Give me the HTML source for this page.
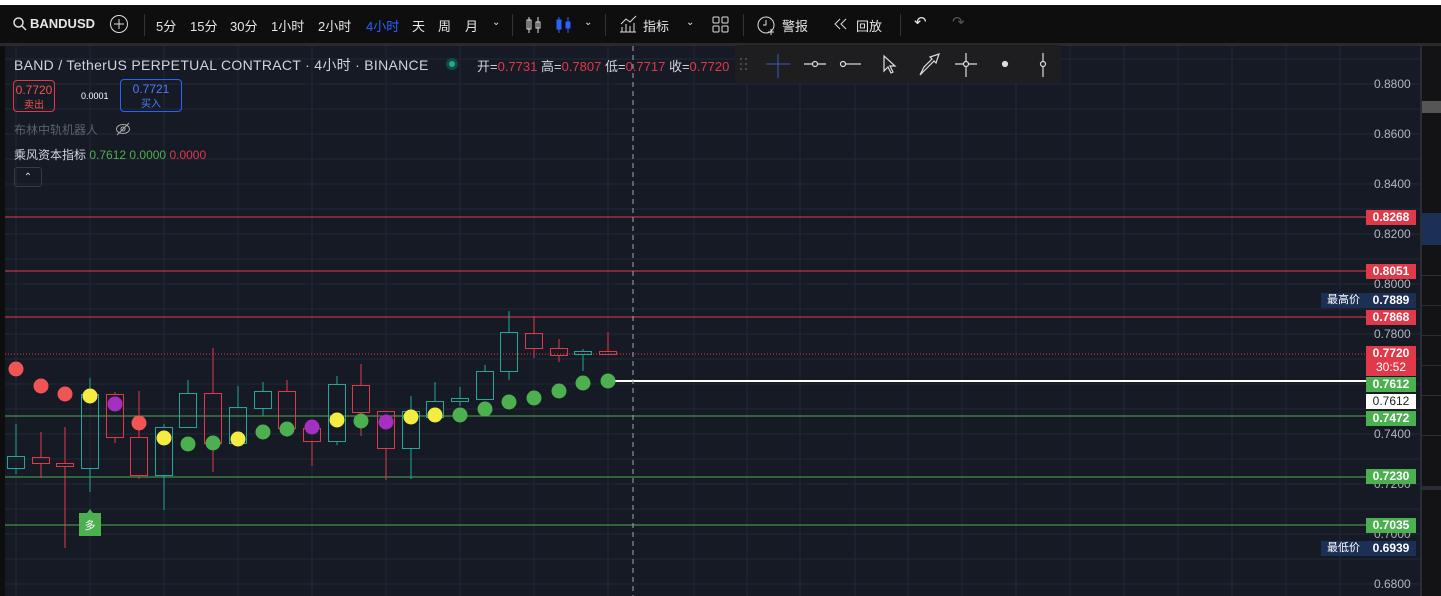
<!DOCTYPE html>
<html><head><meta charset="utf-8"><style>
*{margin:0;padding:0;box-sizing:border-box}
body{width:1441px;height:596px;overflow:hidden;background:#161a25;font-family:"Liberation Sans","Noto Sans CJK SC",sans-serif;position:relative}
.top{position:absolute;left:0;top:0;width:1441px;height:5px;background:#fff}
.tb{position:absolute;left:0;top:5px;width:1441px;height:38px;background:#0e0e0f;color:#e6e6e6;font-size:13px}
.tb span{position:absolute;top:11px;white-space:nowrap}
.sep{position:absolute;top:9px;width:1px;height:22px;background:#333}
.bar{position:absolute;left:0;top:43px;width:1441px;height:3px;background:#2a2a2c}
.rp{position:absolute;left:1420px;top:46px;width:21px;height:550px;background:#131315;border-left:2px solid #2a2d35}
.lb{position:absolute;left:0;top:46px;width:5px;height:550px;background:#0e0e0f}
.t{position:absolute;white-space:nowrap}
.tag{position:absolute;left:1366px;width:50px;height:15px;font-size:12px;font-weight:bold;color:#fff;text-align:center;line-height:15px}
</style></head><body>
<div class="top"></div>
<div class="tb">
<svg style="position:absolute;left:13px;top:12px" width="14" height="14"><circle cx="5.5" cy="5.5" r="4.5" fill="none" stroke="#ddd" stroke-width="1.5"/><line x1="9" y1="9" x2="13" y2="13" stroke="#ddd" stroke-width="1.5"/></svg>
<span style="left:30px;font-weight:bold">BANDUSD</span>
<svg style="position:absolute;left:109px;top:9px" width="20" height="20"><circle cx="10" cy="10" r="8.5" fill="none" stroke="#ddd"/><path d="M10 5v10M5 10h10" stroke="#ddd"/></svg>
<div class="sep" style="left:144px"></div>
<span style="left:156px">5分</span><span style="left:190px">15分</span><span style="left:230px">30分</span><span style="left:271px">1小时</span><span style="left:318px">2小时</span><span style="left:366px;color:#2962ff">4小时</span><span style="left:412px">天</span><span style="left:438px">周</span><span style="left:465px">月</span>
<span style="left:492px;font-size:10px;top:12px">⌄</span>
<div class="sep" style="left:512px"></div>
<svg style="position:absolute;left:524px;top:10px" width="20" height="20"><path d="M5 2v16M3 5h4v9H3zM14 2v16M12 7h4v6h-4z" fill="none" stroke="#ddd"/></svg>
<svg style="position:absolute;left:554px;top:10px" width="20" height="20"><path d="M5 2v16M3 5h4v9H3zM14 2v16M12 7h4v6h-4z" fill="#2962ff" stroke="#2962ff"/></svg>
<span style="left:584px;font-size:10px;top:12px">⌄</span>
<div class="sep" style="left:605px"></div>
<svg style="position:absolute;left:618px;top:9px" width="20" height="20"><path d="M2 18h16M4 18v-5M8 18v-8M12 18v-6M16 18v-9M3 10l5-5 4 3 6-6" fill="none" stroke="#ddd"/></svg>
<span style="left:643px">指标</span>
<span style="left:686px;font-size:10px;top:12px">⌄</span>
<svg style="position:absolute;left:712px;top:11px" width="17" height="17"><rect x="1" y="1" width="6" height="6" rx="1" fill="none" stroke="#ddd"/><rect x="10" y="1" width="6" height="6" rx="1" fill="none" stroke="#ddd"/><rect x="1" y="10" width="6" height="6" rx="1" fill="none" stroke="#ddd"/><rect x="10" y="10" width="6" height="6" rx="1" fill="none" stroke="#ddd"/></svg>
<div class="sep" style="left:743px"></div>
<svg style="position:absolute;left:756px;top:9px" width="22" height="22"><circle cx="10" cy="11" r="8" fill="none" stroke="#ddd"/><path d="M10 6v5h-3M15 15v6M12 18h6" stroke="#ddd" fill="none"/></svg>
<span style="left:782px">警报</span>
<svg style="position:absolute;left:833px;top:13px" width="16" height="12" fill="none" stroke="#ddd"><path d="M7 1L2 6l5 5M13 1L8 6l5 5"/></svg><span style="left:856px">回放</span>
<div class="sep" style="left:900px"></div>
<span style="left:914px;font-size:15px;top:8px">↶</span><span style="left:952px;font-size:15px;top:8px;color:#555">↷</span>
</div>
<div class="bar"></div>
<div class="lb"></div>
<svg style="position:absolute;left:5px;top:46px" width="1415" height="550">
<g stroke="#232837" stroke-width="1">
<line x1="0" x2="1415" y1="13" y2="13"/><line x1="0" x2="1415" y1="38" y2="38"/><line x1="0" x2="1415" y1="63" y2="63"/><line x1="0" x2="1415" y1="88" y2="88"/><line x1="0" x2="1415" y1="113" y2="113"/><line x1="0" x2="1415" y1="138" y2="138"/><line x1="0" x2="1415" y1="163" y2="163"/><line x1="0" x2="1415" y1="188" y2="188"/><line x1="0" x2="1415" y1="213" y2="213"/><line x1="0" x2="1415" y1="238" y2="238"/><line x1="0" x2="1415" y1="263" y2="263"/><line x1="0" x2="1415" y1="288" y2="288"/><line x1="0" x2="1415" y1="313" y2="313"/><line x1="0" x2="1415" y1="338" y2="338"/><line x1="0" x2="1415" y1="363" y2="363"/><line x1="0" x2="1415" y1="388" y2="388"/><line x1="0" x2="1415" y1="413" y2="413"/><line x1="0" x2="1415" y1="438" y2="438"/><line x1="0" x2="1415" y1="463" y2="463"/><line x1="0" x2="1415" y1="488" y2="488"/><line x1="0" x2="1415" y1="513" y2="513"/><line x1="0" x2="1415" y1="538" y2="538"/>
<line y1="0" y2="550" x1="11" x2="11"/><line y1="0" y2="550" x1="85" x2="85"/><line y1="0" y2="550" x1="159" x2="159"/><line y1="0" y2="550" x1="233" x2="233"/><line y1="0" y2="550" x1="307" x2="307"/><line y1="0" y2="550" x1="381" x2="381"/><line y1="0" y2="550" x1="455" x2="455"/><line y1="0" y2="550" x1="529" x2="529"/><line y1="0" y2="550" x1="603" x2="603"/><line y1="0" y2="550" x1="689" x2="689"/><line y1="0" y2="550" x1="742" x2="742"/><line y1="0" y2="550" x1="795" x2="795"/><line y1="0" y2="550" x1="850" x2="850"/><line y1="0" y2="550" x1="903" x2="903"/><line y1="0" y2="550" x1="957" x2="957"/><line y1="0" y2="550" x1="1011" x2="1011"/><line y1="0" y2="550" x1="1065" x2="1065"/><line y1="0" y2="550" x1="1119" x2="1119"/><line y1="0" y2="550" x1="1173" x2="1173"/><line y1="0" y2="550" x1="1227" x2="1227"/><line y1="0" y2="550" x1="1281" x2="1281"/><line y1="0" y2="550" x1="1335" x2="1335"/>
</g>
<g stroke-width="1">
<line x1="0" x2="1361" y1="171" y2="171" stroke="#e0394a"/>
<line x1="0" x2="1361" y1="225" y2="225" stroke="#e0394a"/>
<line x1="0" x2="1361" y1="271" y2="271" stroke="#e0394a"/>
<line x1="0" x2="1361" y1="308" y2="308" stroke="#e0394a" stroke-dasharray="1 2"/>
<line x1="0" x2="1361" y1="370" y2="370" stroke="#4caf50"/>
<line x1="0" x2="1361" y1="431" y2="431" stroke="#4caf50"/>
<line x1="0" x2="1361" y1="479" y2="479" stroke="#4caf50"/>
<line x1="610" x2="1361" y1="335" y2="335" stroke="#fff" stroke-width="2"/>
<line x1="628" x2="628" y1="0" y2="550" stroke="#9aa" stroke-dasharray="5 4"/>
</g>
<g fill="none" stroke-width="1">
<g stroke="#26a69a">
<path d="M11 378v32M11 422v6"/><rect x="2.5" y="410.5" width="17" height="12"/>
<path d="M85 332v16M85 422v24"/><rect x="76.5" y="348.5" width="17" height="74"/>
<path d="M159 378v3M159 429v35"/><rect x="150.5" y="381.5" width="17" height="48"/>
<path d="M183 334v13"/><rect x="174.5" y="347.5" width="17" height="34"/>
<path d="M233 340v21M233 397v2"/><rect x="224.5" y="361.5" width="17" height="36"/>
<path d="M258 336v9M258 362v8"/><rect x="249.5" y="345.5" width="17" height="17"/>
<path d="M332 330v8M332 395v4"/><rect x="323.5" y="338.5" width="17" height="57"/>
<path d="M406 350v15M406 402v31"/><rect x="397.5" y="365.5" width="17" height="37"/>
<path d="M430 336v19M430 371v1"/><rect x="421.5" y="355.5" width="17" height="16"/>
<path d="M455 341v11M455 355v5"/><rect x="446.5" y="352.5" width="17" height="3"/>
<path d="M480 319v6M480 353v1"/><rect x="471.5" y="325.5" width="17" height="28"/>
<path d="M504 265v21M504 325v9"/><rect x="495.5" y="286.5" width="17" height="39"/>
<path d="M578 303v2M578 308v17"/><rect x="569.5" y="305.5" width="17" height="3"/>
</g>
<g stroke="#e0394a">
<path d="M36 386v25M36 417v15"/><rect x="27.5" y="411.5" width="17" height="6"/>
<path d="M60 381v36M60 420v82"/><rect x="51.5" y="417.5" width="17" height="3"/>
<path d="M110 346v2M110 391v6"/><rect x="101.5" y="348.5" width="17" height="43"/>
<path d="M134 345v46M134 429v4"/><rect x="125.5" y="391.5" width="17" height="38"/>
<path d="M208 302v45M208 397v29"/><rect x="199.5" y="347.5" width="17" height="50"/>
<path d="M282 334v11M282 382v9"/><rect x="273.5" y="345.5" width="17" height="37"/>
<path d="M307 374v8M307 395v25"/><rect x="298.5" y="382.5" width="17" height="13"/>
<path d="M356 318v21M356 366v24"/><rect x="347.5" y="339.5" width="17" height="27"/>
<path d="M381 402v32"/><rect x="372.5" y="365.5" width="17" height="37"/>
<path d="M529 271v16M529 302v10"/><rect x="520.5" y="287.5" width="17" height="15"/>
<path d="M554 293v9M554 309v7"/><rect x="545.5" y="302.5" width="17" height="7"/>
<path d="M603 286v19"/><rect x="594.5" y="305.5" width="17" height="3"/>
</g>
</g>
<g>
<circle cx="11" cy="323" r="7.5" fill="#f05454"/><circle cx="36" cy="340" r="7.5" fill="#f05454"/><circle cx="60" cy="348" r="7.5" fill="#f05454"/>
<circle cx="85" cy="350" r="7.5" fill="#f5ec42"/><circle cx="110" cy="358" r="7.5" fill="#a52fc0"/><circle cx="134" cy="377" r="7.5" fill="#f05454"/>
<circle cx="159" cy="392" r="7.5" fill="#f5ec42"/><circle cx="183" cy="398" r="7.5" fill="#4caf50"/><circle cx="208" cy="397" r="7.5" fill="#4caf50"/>
<circle cx="233" cy="393" r="7.5" fill="#f5ec42"/><circle cx="258" cy="386" r="7.5" fill="#4caf50"/><circle cx="282" cy="383" r="7.5" fill="#4caf50"/>
<circle cx="307" cy="381" r="7.5" fill="#a52fc0"/><circle cx="332" cy="374" r="7.5" fill="#f5ec42"/><circle cx="356" cy="375" r="7.5" fill="#4caf50"/>
<circle cx="381" cy="376" r="7.5" fill="#a52fc0"/><circle cx="406" cy="371" r="7.5" fill="#f5ec42"/><circle cx="430" cy="369" r="7.5" fill="#f5ec42"/>
<circle cx="455" cy="369" r="7.5" fill="#4caf50"/><circle cx="480" cy="363" r="7.5" fill="#4caf50"/><circle cx="504" cy="356" r="7.5" fill="#4caf50"/>
<circle cx="529" cy="352" r="7.5" fill="#4caf50"/><circle cx="554" cy="345" r="7.5" fill="#4caf50"/><circle cx="578" cy="337" r="7.5" fill="#4caf50"/><circle cx="603" cy="335" r="7.5" fill="#4caf50"/>
</g>
<path d="M74 467h8l3-4 3 4h8v23h-22z" fill="#4caf50"/>
<text x="85" y="483" fill="#fff" font-size="11" text-anchor="middle" font-family="Noto Sans CJK SC">多</text>
</svg>
<!-- drawing toolbar -->
<div style="position:absolute;left:735px;top:45px;width:326px;height:38px;background:#1e1e20;border-radius:3px"></div>
<svg style="position:absolute;left:735px;top:45px" width="326" height="38" fill="none" stroke="#ddd" stroke-width="1.2">
<g fill="#555" stroke="none"><circle cx="6" cy="14" r="1"/><circle cx="11" cy="14" r="1"/><circle cx="6" cy="19" r="1"/><circle cx="11" cy="19" r="1"/><circle cx="6" cy="24" r="1"/><circle cx="11" cy="24" r="1"/></g>
<path d="M43 9v24M31 19h24" stroke="#3a5fb8" stroke-width="1"/>
<path d="M69 19h8M83 19h8"/><circle cx="80" cy="19" r="2.5"/>
<circle cx="108" cy="19" r="2.5"/><path d="M111 19h15"/>
<path d="M149 11l0 15 4-4 3 6 2-1-3-6 5 0z"/>
<path d="M185 30l4-8 8-8-2-2 9-3-3 9-2-2-8 8z"/>
<path d="M231 8v24M220 19h22"/><circle cx="231" cy="19" r="2.5" fill="#1e1e20"/>
<circle cx="270" cy="19" r="2.5" fill="#ddd"/>
<path d="M308 8v24"/><circle cx="308" cy="19" r="2.5" fill="#1e1e20"/>
</svg>
<!-- legend -->
<div class="t" style="left:14px;top:55px;color:#d1d4dc;font-size:14px;letter-spacing:0.3px">BAND / TetherUS PERPETUAL CONTRACT · 4小时 · BINANCE</div>
<div style="position:absolute;left:446px;top:58px;width:12px;height:12px;border-radius:6px;background:#134a3f"></div>
<div style="position:absolute;left:449px;top:61px;width:6px;height:6px;border-radius:3px;background:#26a69a"></div>
<div class="t" style="left:477px;top:56px;font-size:13px;color:#d1d4dc">开=<span style="color:#e0394a">0.7731</span> 高=<span style="color:#e0394a">0.7807</span> 低=<span style="color:#e0394a">0.7717</span> 收=<span style="color:#e0394a">0.7720</span></div>
<div style="position:absolute;left:13px;top:80px;width:42px;height:32px;border:1px solid #e0394a;border-radius:4px;color:#f05454;font-size:12px;text-align:center;line-height:14px;padding-top:2px">0.7720<br><span style="font-size:10px">卖出</span></div>
<div class="t" style="left:81px;top:91px;color:#fff;font-size:9px">0.0001</div>
<div style="position:absolute;left:120px;top:79px;width:62px;height:33px;border:1px solid #2962ff;border-radius:4px;color:#4f7bff;font-size:12px;text-align:center;line-height:14px;padding-top:2px">0.7721<br><span style="font-size:10px">买入</span></div>
<div class="t" style="left:14px;top:121px;color:#5d606b;font-size:12px">布林中轨机器人</div>
<svg style="position:absolute;left:115px;top:121px" width="16" height="16" fill="none" stroke="#aaa"><ellipse cx="8" cy="8" rx="6.5" ry="4.5"/><circle cx="8" cy="8" r="2"/><path d="M2 14L14 2"/></svg>
<div class="t" style="left:14px;top:146px;color:#d1d4dc;font-size:12px">乘风资本指标 <span style="color:#4caf50">0.7612</span> <span style="color:#4caf50">0.0000</span> <span style="color:#e0394a">0.0000</span></div>
<div style="position:absolute;left:14px;top:167px;width:28px;height:20px;border:1px solid #363a45;border-radius:3px;color:#ddd;font-size:10px;text-align:center;line-height:20px">⌃</div>
<!-- axis labels -->
<div style="font-size:12px;color:#b2b5be">
<div class="t" style="left:1374px;top:77px">0.8800</div>
<div class="t" style="left:1374px;top:127px">0.8600</div>
<div class="t" style="left:1374px;top:177px">0.8400</div>
<div class="t" style="left:1374px;top:227px">0.8200</div>
<div class="t" style="left:1374px;top:277px">0.8000</div>
<div class="t" style="left:1374px;top:327px">0.7800</div>
<div class="t" style="left:1374px;top:427px">0.7400</div>
<div class="t" style="left:1374px;top:477px">0.7200</div>
<div class="t" style="left:1374px;top:527px">0.7000</div>
<div class="t" style="left:1374px;top:577px">0.6800</div>
</div>
<div class="tag" style="top:210px;background:#e0394a">0.8268</div>
<div class="tag" style="top:264px;background:#e0394a">0.8051</div>
<div class="tag" style="top:293px;background:#1c2f55">0.7889</div>
<div style="position:absolute;left:1321px;top:293px;width:45px;height:15px;background:#1c2f55;color:#fff;font-size:11px;text-align:center;line-height:15px">最高价</div>
<div class="tag" style="top:310px;background:#e0394a">0.7868</div>
<div class="tag" style="top:346px;height:30px;background:#e0394a;line-height:14px">0.7720<br><span style="font-weight:normal">30:52</span></div>
<div class="tag" style="top:377px;background:#4caf50">0.7612</div>
<div class="tag" style="top:394px;background:#fff;color:#222;font-weight:normal">0.7612</div>
<div class="tag" style="top:411px;background:#4caf50">0.7472</div>
<div class="tag" style="top:469px;background:#4caf50">0.7230</div>
<div class="tag" style="top:518px;background:#4caf50">0.7035</div>
<div class="tag" style="top:541px;background:#1c2f55">0.6939</div>
<div style="position:absolute;left:1321px;top:541px;width:45px;height:15px;background:#1c2f55;color:#fff;font-size:11px;text-align:center;line-height:15px">最低价</div>
<div class="rp">
<div style="position:absolute;left:0;top:55px;width:21px;height:12px;background:#555"></div>
<div style="position:absolute;left:0;top:167px;width:21px;height:32px;background:#1c2f55"></div>
<div style="position:absolute;left:0;top:229px;width:21px;height:1px;background:#2a2d35"></div>
<div style="position:absolute;left:0;top:259px;width:21px;height:1px;background:#2a2d35"></div>
<div style="position:absolute;left:0;top:289px;width:21px;height:1px;background:#2a2d35"></div>
<div style="position:absolute;left:0;top:319px;width:21px;height:1px;background:#2a2d35"></div>
<div style="position:absolute;left:0;top:349px;width:21px;height:1px;background:#2a2d35"></div>
<div style="position:absolute;left:0;top:389px;width:21px;height:1px;background:#2a2d35"></div>
<div style="position:absolute;left:0;top:440px;width:21px;height:4px;background:#2a2d35"></div>
</div>
</body></html>
